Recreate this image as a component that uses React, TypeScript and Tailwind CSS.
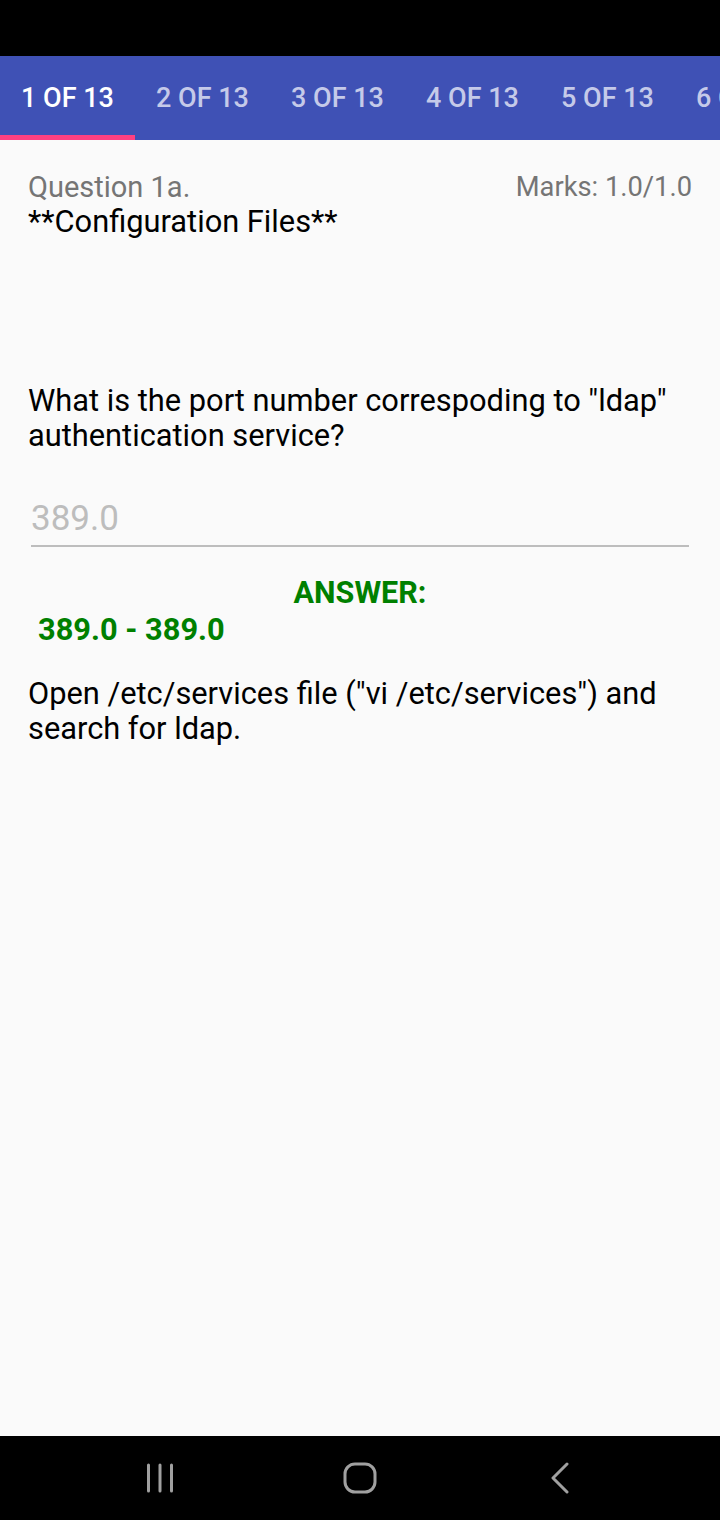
import React from "react";

const tabs = ["1 OF 13", "2 OF 13", "3 OF 13", "4 OF 13", "5 OF 13", "6 OF 13"];

function TabBar() {
  return (
    <div className="flex h-[84px] bg-[#3F51B5] overflow-hidden">
      {tabs.map((t, i) => (
        <div
          key={t}
          className={
            i === 0
              ? "relative flex w-[135px] shrink-0 items-center justify-center whitespace-nowrap text-[27px] font-medium text-white"
              : "relative flex w-[135px] shrink-0 items-center justify-center whitespace-nowrap text-[27px] font-medium text-[#C5CAE9]"
          }
        >
          {t}
          {i === 0 && <div className="absolute bottom-0 left-0 h-[5px] w-full bg-[#FF4081]" />}
        </div>
      ))}
    </div>
  );
}

function NavBar() {
  return (
    <div className="flex h-[84px] items-center justify-center bg-black">
      <div className="flex w-[200px] justify-center">
        <svg width="30" height="30" viewBox="0 0 30 30">
          <g stroke="#A0A0A0" strokeWidth="3" strokeLinecap="round">
            <line x1="3.5" y1="2" x2="3.5" y2="28" />
            <line x1="15" y1="2" x2="15" y2="28" />
            <line x1="26.5" y1="2" x2="26.5" y2="28" />
          </g>
        </svg>
      </div>
      <div className="flex w-[200px] justify-center">
        <svg width="34" height="32" viewBox="0 0 34 32">
          <rect x="2" y="2" width="30" height="28" rx="10" fill="none" stroke="#A0A0A0" strokeWidth="3" />
        </svg>
      </div>
      <div className="flex w-[200px] justify-center">
        <svg width="22" height="32" viewBox="0 0 22 32">
          <polyline points="18,2 4,16 18,30" fill="none" stroke="#A0A0A0" strokeWidth="3" strokeLinecap="round" strokeLinejoin="round" />
        </svg>
      </div>
    </div>
  );
}

export default function App() {
  return (
    <div className="flex h-[1520px] w-[720px] flex-col bg-[#FAFAFA] font-['Roboto',sans-serif]">
      <div className="h-[56px] bg-black" />
      <TabBar />
      <div className="flex flex-1 flex-col px-[28px] pt-[30px]">
        <div className="flex items-start justify-between">
          <span className="text-[29px] leading-[34px] text-[#757575]">Question 1a.</span>
          <span className="text-[27.3px] leading-[34px] text-[#757575]">Marks: 1.0/1.0</span>
        </div>
        <div className="text-[30.8px] leading-[36px] text-black">**Configuration Files**</div>

        <p className="mt-[143px] text-[30.8px] leading-[35px] text-black">
          What is the port number correspoding to "ldap" authentication service?
        </p>

        <div className="mx-[3px] mt-[46px] border-b-2 border-[#BDBDBD] pb-[6px]">
          <span className="text-[35px] leading-[40px] text-[#BDBDBD]">389.0</span>
        </div>

        <div className="mt-[28px] text-center text-[30.5px] font-bold leading-[36px] text-[#008000]">ANSWER:</div>
        <div className="ml-[10px] mt-[1px] text-[30.8px] font-bold leading-[36px] text-[#008000]">389.0 - 389.0</div>

        <p className="mt-[28px] text-[30.8px] leading-[35px] text-black">
          Open /etc/services file ("vi /etc/services") and search for ldap.
        </p>
      </div>
      <NavBar />
    </div>
  );
}
